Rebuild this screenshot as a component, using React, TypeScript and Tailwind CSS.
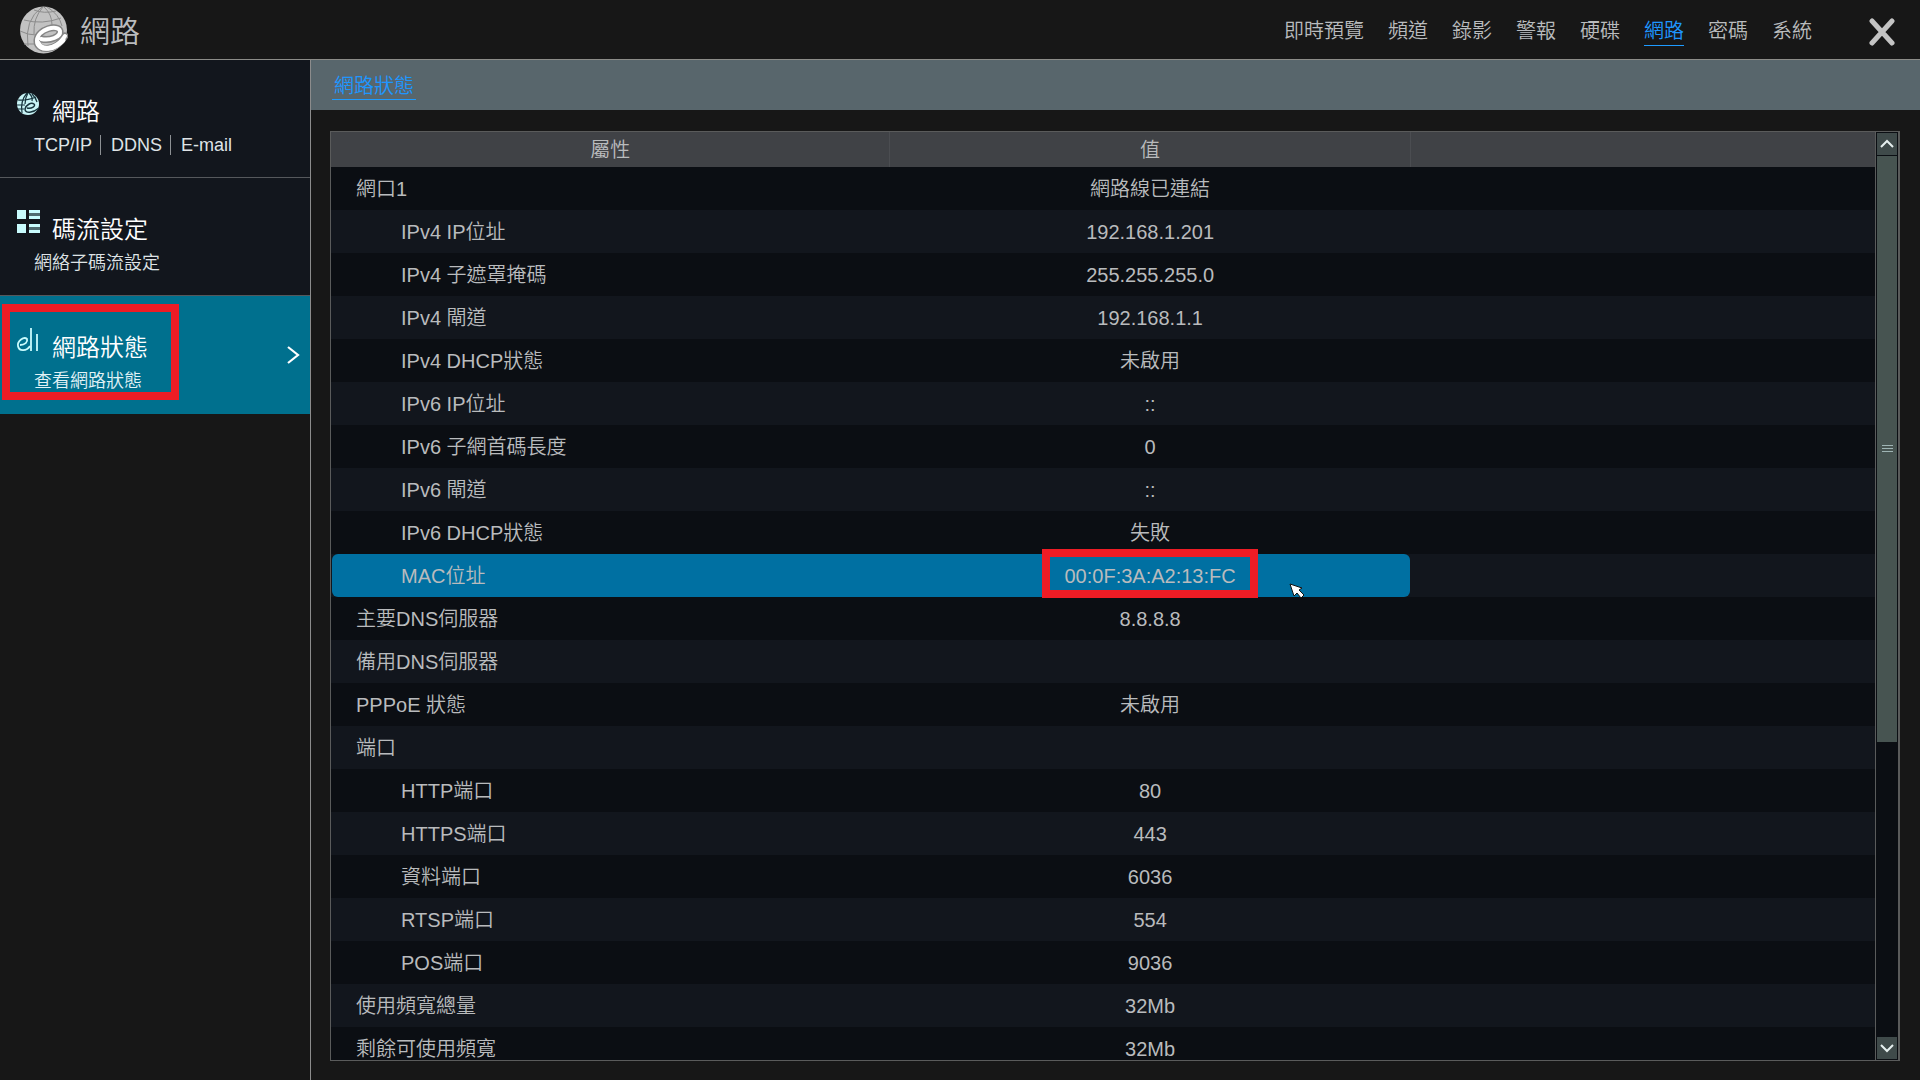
import React from "react";

const navItems = ["即時預覽", "頻道", "錄影", "警報", "硬碟", "網路", "密碼", "系統"];

type Row = { name: string; value: string; child?: boolean; selected?: boolean };

const rows: Row[] = [
  { name: "網口1", value: "網路線已連結" },
  { name: "IPv4 IP位址", value: "192.168.1.201", child: true },
  { name: "IPv4 子遮罩掩碼", value: "255.255.255.0", child: true },
  { name: "IPv4 閘道", value: "192.168.1.1", child: true },
  { name: "IPv4 DHCP狀態", value: "未啟用", child: true },
  { name: "IPv6 IP位址", value: "::", child: true },
  { name: "IPv6 子網首碼長度", value: "0", child: true },
  { name: "IPv6 閘道", value: "::", child: true },
  { name: "IPv6 DHCP狀態", value: "失敗", child: true },
  { name: "MAC位址", value: "00:0F:3A:A2:13:FC", child: true, selected: true },
  { name: "主要DNS伺服器", value: "8.8.8.8" },
  { name: "備用DNS伺服器", value: "" },
  { name: "PPPoE 狀態", value: "未啟用" },
  { name: "端口", value: "" },
  { name: "HTTP端口", value: "80", child: true },
  { name: "HTTPS端口", value: "443", child: true },
  { name: "資料端口", value: "6036", child: true },
  { name: "RTSP端口", value: "554", child: true },
  { name: "POS端口", value: "9036", child: true },
  { name: "使用頻寬總量", value: "32Mb" },
  { name: "剩餘可使用頻寬", value: "32Mb" },
];

function GlobeLogo() {
  return (
    <svg className="size-12" viewBox="0 0 48 48" aria-hidden="true">
      <circle cx="23.5" cy="24" r="23.5" fill="#c2c2c2" />
      <g fill="none" stroke="#8c8c8c" strokeWidth="1">
        <path d="M4 14 Q22 19 41 12" />
        <path d="M0 25 Q8 29 16 29" />
        <path d="M22 1 Q4 14 8 40" />
        <path d="M23 1 Q13 12 14 28" />
        <path d="M24 1 Q32 8 32 19" />
        <path d="M27 1 Q39 8 42 20" />
        <path d="M14 4 Q24 8 36 5" />
        <path d="M4 38 L14 38" />
      </g>
      <g fill="none" strokeLinecap="round">
        <path
          d="M21 33 C30 35 41 31 40 25 C38 18 18 23 17 34 C16 46 36 46 45 30"
          stroke="#858585"
          strokeWidth="7"
        />
        <path
          d="M21 33 C30 35 41 31 40 25 C38 18 18 23 17 34 C16 46 36 46 45 30"
          stroke="#ffffff"
          strokeWidth="4"
        />
        <path d="M18 37 C21 45 34 44 43 34" stroke="#ffffff" strokeWidth="5" />
      </g>
    </svg>
  );
}

function GlobeIcon() {
  return (
    <svg className="size-6" viewBox="0 0 24 24" aria-hidden="true">
      <circle cx="12" cy="12" r="11" fill="#c8f4f6" />
      <g fill="none" stroke="#16333c" strokeWidth="1.2">
        <path d="M2 8 Q10 9 20 5 M1 13 L9 13 M2 17 L8 17" />
        <path d="M11 1 Q4 9 6 21 M12 1 Q9 6 9 12 M13 1 Q17 5 16 9 M16 2 Q20 6 21 10" />
        <path d="M11 16 C16 17 20 14 18 12 C15 10 10 13 9 17 C9 22 17 21 23 16" strokeWidth="1.5" />
      </g>
    </svg>
  );
}

function StreamIcon() {
  return (
    <svg className="size-6" viewBox="0 0 24 24" aria-hidden="true">
      <path
        fill="#c8fbfd"
        d="M1 0h9v9H1z M1 14h9v9H1z M13 0h11v3H13z M13 6h11v3H13z M13 14h11v3H13z M13 20h11v3H13z"
      />
      <path fill="#4f6b70" d="M13 3h11v3H13z M13 17h11v3H13z" />
    </svg>
  );
}

function StatusIcon() {
  return (
    <svg className="size-6" viewBox="0 0 24 24" aria-hidden="true">
      <g fill="none" stroke="#c8fbfd" strokeWidth="1.8">
        <path d="M4 17 C9 17 12 14 11 11 C8 8 1 13 2 18 C3 24 11 23 14 18" />
        <path d="M15 0 V23 M21 6 V23" />
      </g>
    </svg>
  );
}

type SideItemProps = {
  icon: React.ReactNode;
  title: string;
  links: string[];
  active?: boolean;
};

function SideItem({ icon, title, links, active }: SideItemProps) {
  return (
    <li
      className={
        active
          ? "flex h-[118px] items-center justify-between bg-[#00708e] pr-[6px] text-[#e2f2f6]"
          : "flex h-[118px] justify-between border-b border-[#55585c] bg-[#12161d] pr-2 text-[#dfe3e6]"
      }
    >
      <div className={active ? "self-start pt-8 pl-4" : "pt-8 pl-4"}>
        <button type="button" className="flex h-[41px] items-start gap-3">
          {icon}
          <span className="pt-1 text-2xl leading-8 text-white">{title}</span>
        </button>
        <ul className="flex h-6 items-center pl-[18px] text-lg leading-6">
          {links.map((l, i) => (
            <li
              key={l}
              className={
                i > 0
                  ? "ml-2 flex h-5 items-center border-l border-[#8d9194] pl-[10px]"
                  : "flex items-center"
              }
            >
              <a href="#">{l}</a>
            </li>
          ))}
        </ul>
      </div>
      {active && (
        <svg className="size-5" viewBox="0 0 20 20" aria-hidden="true">
          <path d="M4 2 L14 10 L4 18" fill="none" stroke="#ffffff" strokeWidth="2.2" />
        </svg>
      )}
    </li>
  );
}

export default function App() {
  return (
    <div className="flex h-screen flex-col overflow-hidden bg-[#171717] font-['Liberation_Sans','Noto_Sans_CJK_TC',sans-serif] font-[350] text-[#b9bbbd]">
      <header className="flex h-[60px] shrink-0 items-center justify-between border-b border-[#8c8c88] pr-6 pl-5">
        <div className="flex items-center gap-3">
          <GlobeLogo />
          <h1 className="pt-1 text-3xl font-[350]">網路</h1>
        </div>
        <div className="flex items-center gap-14">
          <nav className="flex gap-6 pt-1 text-xl leading-7">
            {navItems.map((n) => (
              <a
                key={n}
                href="#"
                className={
                  n === "網路"
                    ? "border-b border-[#1e9bff] text-[#1e96ff]"
                    : "border-b border-transparent"
                }
              >
                {n}
              </a>
            ))}
          </nav>
          <button type="button" aria-label="關閉" className="pt-1">
            <svg className="size-7" viewBox="0 0 28 28" aria-hidden="true">
              <path d="M4 3 L24 25 M24 3 L4 25" stroke="#c4c4c4" strokeWidth="5" strokeLinecap="round" />
            </svg>
          </button>
        </div>
      </header>

      <div className="flex min-h-0 grow">
        <aside className="relative w-[311px] shrink-0 border-r border-[#8c8c8c]">
          <ul>
            <SideItem icon={<GlobeIcon />} title="網路" links={["TCP/IP", "DDNS", "E-mail"]} />
            <SideItem icon={<StreamIcon />} title="碼流設定" links={["網絡子碼流設定"]} />
            <SideItem icon={<StatusIcon />} title="網路狀態" links={["查看網路狀態"]} active />
          </ul>
          <div className="pointer-events-none absolute top-[244px] left-[2px] h-24 w-[177px] border-8 border-[#ee1c25]" />
        </aside>

        <main className="flex min-w-0 grow flex-col">
          <div className="flex h-[50px] shrink-0 items-center bg-[#58666c] pt-[2px] pl-[21px]">
            <a href="#" className="border-b border-[#1e9bff] px-[2px] text-xl leading-[26px] text-[#1e96ff]">
              網路狀態
            </a>
          </div>

          <div className="mt-[21px] mr-5 mb-[19px] ml-[19px] flex min-h-0 grow border border-r-2 border-[#5a5b5b] bg-[#0b0e13]">
            <div className="min-w-0 grow overflow-hidden">
              <table className="w-full table-fixed border-collapse text-xl leading-6">
                <colgroup>
                  <col className="w-[36.2%]" />
                  <col className="w-[33.7%]" />
                  <col />
                </colgroup>
                <thead>
                  <tr className="h-[35px] bg-[#404246]">
                    <th className="border-r border-[#4b4d51] p-0 font-[350]">屬性</th>
                    <th className="border-r border-[#4b4d51] p-0 font-[350]">值</th>
                    <th className="p-0" />
                  </tr>
                </thead>
                <tbody>
                  {rows.map((r) => (
                    <tr key={r.name} className="h-[43px] odd:bg-[#0b0e13] even:bg-[#12161d]">
                      <td className="p-0">
                        <div
                          className={
                            r.selected
                              ? "ml-px flex h-[43px] items-center rounded-l-md bg-[#0070a2] pl-[69px]"
                              : r.child
                                ? "flex h-[43px] items-center pl-[70px]"
                                : "flex h-[43px] items-center pl-[25px]"
                          }
                        >
                          {r.name}
                        </div>
                      </td>
                      <td className="p-0">
                        <div
                          className={
                            r.selected
                              ? "relative flex h-[43px] items-center justify-center rounded-r-md bg-[#0070a2]"
                              : "flex h-[43px] items-center justify-center"
                          }
                        >
                          {r.value}
                          {r.selected && (
                            <>
                              <span className="pointer-events-none absolute inset-x-0 top-[-5px] mx-auto h-[49px] w-[216px] border-8 border-[#ee1c25]" />
                              <svg
                                className="absolute top-[29px] right-[105px] size-4"
                                viewBox="0 0 16 16"
                                aria-hidden="true"
                              >
                                <path
                                  d="M1 1 L13 5 L10 7 L15 12 L12 15 L8 10 L5 13 Z"
                                  fill="#ffffff"
                                  stroke="#111111"
                                  strokeWidth="1"
                                />
                              </svg>
                            </>
                          )}
                        </div>
                      </td>
                      <td className="p-0" />
                    </tr>
                  ))}
                </tbody>
              </table>
            </div>

            <div className="flex w-[23px] shrink-0 flex-col border-l border-[#5a5b5b] bg-[#0b0e13] p-px">
              <button type="button" aria-label="向上捲動" className="flex h-[22px] shrink-0 items-center justify-center bg-[#3f4a4a]">
                <svg className="size-4" viewBox="0 0 16 16" aria-hidden="true">
                  <path d="M2 11 L8 5 L14 11" fill="none" stroke="#e6efef" strokeWidth="2" />
                </svg>
              </button>
              <div className="mt-px min-h-0 grow">
                <div className="flex h-[66.5%] flex-col items-center justify-center gap-[2px] bg-[#475451]">
                  <span className="h-px w-[11px] bg-[#9fb4b4]" />
                  <span className="h-px w-[11px] bg-[#9fb4b4]" />
                  <span className="h-px w-[11px] bg-[#9fb4b4]" />
                </div>
              </div>
              <button type="button" aria-label="向下捲動" className="flex h-[22px] shrink-0 items-center justify-center bg-[#3f4a4a]">
                <svg className="size-4" viewBox="0 0 16 16" aria-hidden="true">
                  <path d="M2 5 L8 11 L14 5" fill="none" stroke="#e6efef" strokeWidth="2" />
                </svg>
              </button>
            </div>
          </div>
        </main>
      </div>
    </div>
  );
}
